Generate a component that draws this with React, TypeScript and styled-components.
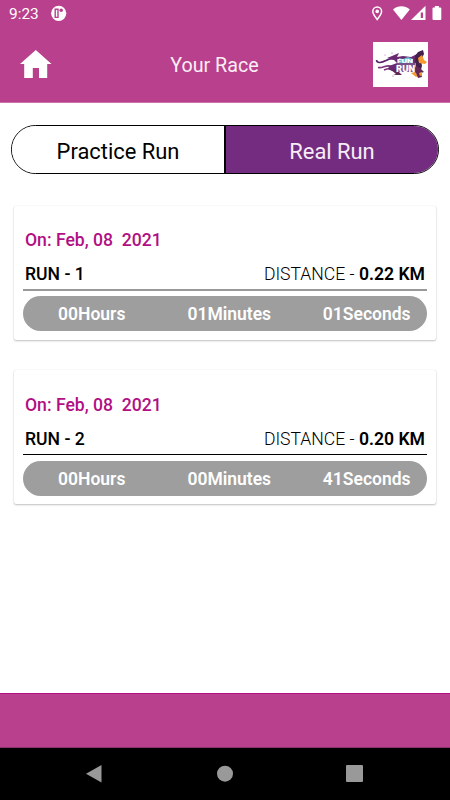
import React from "react";
import styled, { createGlobalStyle } from "styled-components";

const Global = createGlobalStyle`
  * { box-sizing: border-box; }
  body { margin: 0; background: #fff; font-family: Roboto, "Liberation Sans", sans-serif; }
`;

const Screen = styled.div`
  width: 450px;
  height: 800px;
  display: flex;
  flex-direction: column;
  background: #fff;
  overflow: hidden;
`;

const Top = styled.header`
  height: 103px;
  flex: none;
  background: #b9408c;
  border-bottom: 1px solid #c873a9;
`;

const StatusBar = styled.div`
  height: 28px;
  display: flex;
  justify-content: space-between;
  padding: 0 8px 0 9px;
  color: #fff;
`;

const StatusGroup = styled.div`
  display: flex;
  align-items: flex-start;
`;

const Clock = styled.span`
  font-size: 15.4px;
  line-height: 28px;
  width: 41px;
  white-space: nowrap;
`;

const StatusIcons = styled.svg`
  display: block;
`;

const AppBar = styled.div`
  height: 74px;
  display: grid;
  grid-template-columns: 54px 1fr 55px;
  padding: 0 22px 0 20px;
`;

const HomeIcon = styled.svg`
  margin-top: 21px;
`;

const Title = styled.h1`
  margin: 0;
  padding-right: 18px;
  font-size: 19.7px;
  font-weight: 400;
  line-height: 75px;
  text-align: center;
  color: #fbeef6;
`;

const Logo = styled.svg`
  margin-top: 14px;
  background: #fff;
`;

const Content = styled.main`
  flex: 1;
  padding: 22px 11px 0;
`;

const Tabs = styled.div`
  height: 49px;
  display: flex;
  border: 1.4px solid #000;
  border-radius: 25px;
  overflow: hidden;
`;

const Tab = styled.button<{ $active?: boolean }>`
  flex: ${(p) => (p.$active ? "0 0 214px" : "1")};
  border: 0;
  border-left: ${(p) => (p.$active ? "2px solid #000" : "0")};
  padding: 4px 0 0;
  font: 400 21.9px/44px Roboto, sans-serif;
  color: ${(p) => (p.$active ? "#f6edf7" : "#000")};
  background: ${(p) => (p.$active ? "#742c80" : "#fff")};
`;

const Cards = styled.div`
  display: flex;
  flex-direction: column;
  gap: 30px;
  padding: 31.6px 3px 0;
`;

const Card = styled.article`
  height: 134.4px;
  padding: 22.6px 9px 0;
  border-radius: 2px;
  background: #fff;
  box-shadow: 0 1px 2px rgba(0, 0, 0, 0.24), 0 0 1px rgba(0, 0, 0, 0.14);
`;

const DateLine = styled.div`
  padding-left: 2px;
  font-size: 17.6px;
  font-weight: 500;
  line-height: 24px;
  white-space: pre;
  color: #b10f83;
`;

const Summary = styled.div<{ $line: string }>`
  display: flex;
  justify-content: space-between;
  height: 38.8px;
  padding: 9px 2px 0;
  border-bottom: ${(p) => p.$line};
  font-size: 17.6px;
  line-height: 26px;
  color: #000;
`;

const Run = styled.span`
  font-weight: 500;
`;

const Distance = styled.span`
  font-weight: 300;
  b { font-weight: 600; }
`;

const Duration = styled.div`
  height: 35px;
  margin-top: 5.2px;
  display: grid;
  grid-template-columns: repeat(3, 137.5px);
  overflow: hidden;
  border-radius: 17.5px;
  background: #9e9e9e;
  color: #fff;
  font-size: 17.5px;
  font-weight: 600;
  line-height: 37.6px;
  text-align: center;
`;

const Footer = styled.footer`
  height: 55px;
  background: #b9408c;
  border-top: 1px solid #b10f83;
  border-bottom: 1px solid #8c316a;
`;

const NavBar = styled.nav`
  height: 52px;
  background: #000;
`;

const races = [
  { date: "On: Feb, 08  2021", run: 1, km: "0.22", time: ["00", "01", "01"], line: "2px solid #999" },
  { date: "On: Feb, 08  2021", run: 2, km: "0.20", time: ["00", "00", "41"], line: "1px solid #000" },
];

const RunLogo = () => (
  <Logo width="55" height="45" viewBox="0 0 55 45">
    <path d="M3.5 18C4 22 9 20.5 13 18.5 17 16 20 16 25 18" fill="none" stroke="#542066" strokeWidth="1.6" />
    <path d="M5 25.5c5 1 7-2.5 12-1.5l6 1M11 28c4-2 6-1 12-1" fill="none" stroke="#7c347c" strokeWidth="1.6" />
    <path d="M14 16l5-2 7-3-2 4 6-1 8 1 6-3v9H24l-3-3zM16 24l8-3v9l-5-1-4-2z" fill="#6b2a70" />
    <path d="M42 14l3-4 5-2 1 4-3 6 1 6-2 7-4-1z" fill="#42204b" />
    <path d="M45 16l4-3 2 5 3 2-2 2-6-1zM38 31l4-1 3 4-2 1z" fill="#f59b2e" />
    <path d="M43 24l4 2 4 4-3 1 1 4-4 1-2-5-3-2zM17 27l6 5-3 1h9l-5-5z" fill="#632754" />
    <path d="M46 31l3-1v3l-2 1z" fill="#f59b2e" />
    <path d="M26 16l4 1 5-2 5 2v5H26z" fill="#64bfd5" />
    <path d="M24 21h18v9H24z" fill="#79518a" />
    <path d="M32 28l4-6 3 7z" fill="#bd6a92" />
    <text x="24" y="20.5" fontFamily="Roboto" fontSize="5" fontWeight="900" textLength="16" lengthAdjust="spacingAndGlyphs" fill="#fff">FUN</text>
    <text x="23" y="29.7" fontFamily="Roboto" fontSize="8.5" fontWeight="900" textLength="19" lengthAdjust="spacingAndGlyphs" fill="#fff">RUN</text>
    <g fill="#8b5f99"><circle cx="12" cy="13" r=".5" /><circle cx="19" cy="11" r=".6" /><circle cx="20" cy="34" r=".6" /></g>
  </Logo>
);

export default function App() {
  return (
    <>
      <Global />
      <Screen>
        <Top>
          <StatusBar>
            <StatusGroup>
              <Clock>9:23</Clock>
              <StatusIcons width="18" height="28" viewBox="50 0 18 28">
                <circle cx="58.7" cy="13.3" r="7.6" fill="#fff" />
                <path d="M55.2 9.2h2.8v8.2h-2.8z" fill="none" stroke="#b9408c" strokeWidth="1.4" />
                <circle cx="61.2" cy="10.3" r="1.8" fill="#b9408c" />
              </StatusIcons>
            </StatusGroup>
            <StatusIcons width="72" height="28" viewBox="370 0 72 28">
              <path d="M377.2 19.5c-2.4-3-4.4-5.6-4.4-8.2a4.4 4.4 0 0 1 8.8 0c0 2.6-2 5.2-4.4 8.2z" fill="none" stroke="#fff" strokeWidth="1.5" />
              <circle cx="377.2" cy="11.4" r="1.8" fill="#fff" />
              <path d="M393 9.4c5-4.2 11.8-4.2 16.8 0L401.4 20z" fill="#fff" />
              <path d="M425.5 5.8V20H411z" fill="#fff" />
              <path d="M420.8 12.5h2.2v5.5h-2.2z" fill="#b9408c" />
              <path d="M434.9 6h4v1.4h1.3q1.1 0 1.1 1.1V19q0 1.1-1.1 1.1h-6.6q-1.1 0-1.1-1.1V8.5q0-1.1 1.1-1.1h1.3z" fill="#fff" />
            </StatusIcons>
          </StatusBar>
          <AppBar>
            <HomeIcon width="32" height="30" viewBox="0 0 32 30" aria-label="Home">
              <path d="M15.8 1L31.5 15H27.2V29H19V19H12.8V29H4.2V15H0z" fill="#fff" />
            </HomeIcon>
            <Title>Your Race</Title>
            <RunLogo />
          </AppBar>
        </Top>
        <Content>
          <Tabs>
            <Tab>Practice Run</Tab>
            <Tab $active>Real Run</Tab>
          </Tabs>
          <Cards>
            {races.map((r) => (
              <Card key={r.run}>
                <DateLine>{r.date}</DateLine>
                <Summary $line={r.line}>
                  <Run>RUN - {r.run}</Run>
                  <Distance>DISTANCE - <b>{r.km} KM</b></Distance>
                </Summary>
                <Duration>
                  <span>{r.time[0]}Hours</span>
                  <span>{r.time[1]}Minutes</span>
                  <span>{r.time[2]}Seconds</span>
                </Duration>
              </Card>
            ))}
          </Cards>
        </Content>
        <Footer />
        <NavBar>
          <svg width="450" height="52" viewBox="0 748 450 52" fill="#999">
            <path d="M86 773.7L101.5 765V782.6z" />
            <circle cx="225" cy="773.7" r="8" />
            <rect x="346" y="765" width="17" height="17" rx="1" />
          </svg>
        </NavBar>
      </Screen>
    </>
  );
}
